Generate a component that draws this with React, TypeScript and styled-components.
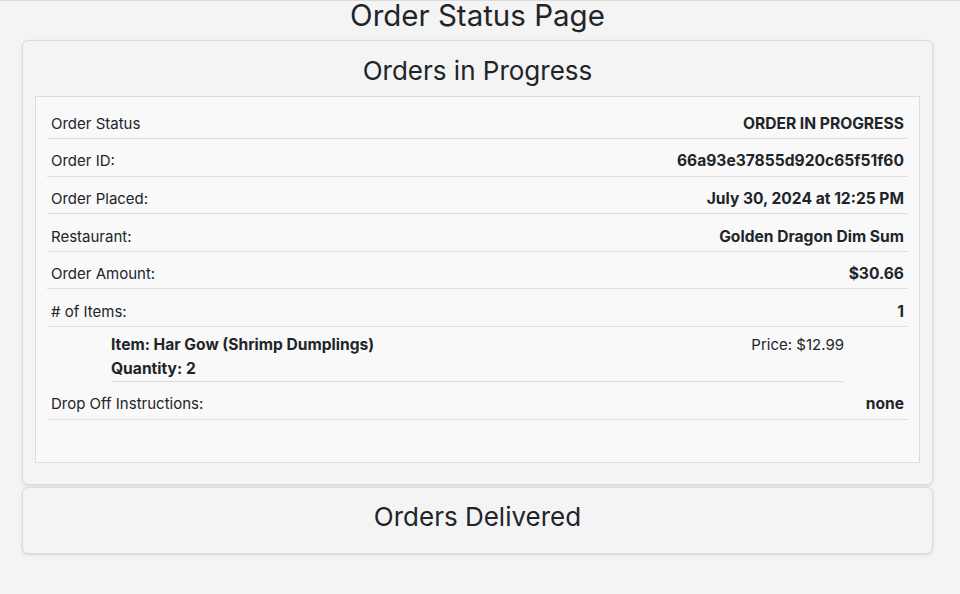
import React from "react";
import styled, { createGlobalStyle } from "styled-components";

const GlobalStyle = createGlobalStyle`
  html, body {
    margin: 0;
    padding: 0;
    background: #f4f4f4;
    font-family: Inter, "Noto Sans", sans-serif;
    color: #212529;
  }
`;

type Detail = { label: string; value: string };

const details: Detail[] = [
  { label: "Order Status", value: "ORDER IN PROGRESS" },
  { label: "Order ID:", value: "66a93e37855d920c65f51f60" },
  { label: "Order Placed:", value: "July 30, 2024 at 12:25 PM" },
  { label: "Restaurant:", value: "Golden Dragon Dim Sum" },
  { label: "Order Amount:", value: "$30.66" },
  { label: "# of Items:", value: "1" },
];

const items = [{ name: "Har Gow (Shrimp Dumplings)", quantity: 2, price: 12.99 }];

const App: React.FC = () => {
  return (
    <Page>
      <GlobalStyle />
      <Title>Order Status Page</Title>
      <Section>
        <SectionTitle>Orders in Progress</SectionTitle>
        <OrderBox>
          {details.map((d) => (
            <Row key={d.label}>
              <Label>{d.label}</Label>
              <Value>{d.value}</Value>
            </Row>
          ))}
          <ItemList>
            {items.map((item) => (
              <Item key={item.name}>
                <ItemInfo>
                  <div>Item: {item.name}</div>
                  <div>Quantity: {item.quantity}</div>
                </ItemInfo>
                <Price>Price: ${item.price.toFixed(2)}</Price>
              </Item>
            ))}
          </ItemList>
          <Row>
            <Label>Drop Off Instructions:</Label>
            <Value>none</Value>
          </Row>
        </OrderBox>
      </Section>
      <Section>
        <SectionTitle>Orders Delivered</SectionTitle>
      </Section>
    </Page>
  );
};

export default App;

const Page = styled.div`
  border-top: 1px solid #dcdcdc;
  padding: 0 27px 0 22px;
  min-height: 593px;
`;

const Title = styled.h1`
  margin: 0 0 10px;
  font-size: 29.5px;
  line-height: 29px;
  font-weight: 400;
  text-align: center;
`;

const Section = styled.section`
  background: #f4f4f4;
  border: 1px solid #dcdcdc;
  border-radius: 6px;
  box-shadow: 0 1px 3px rgba(0, 0, 0, 0.12);
  padding: 13.5px 12px 21px;
  margin-bottom: 2px;
`;

const SectionTitle = styled.h2`
  margin: 0;
  font-size: 26px;
  line-height: 31px;
  font-weight: 400;
  text-align: center;
`;

const OrderBox = styled.div`
  margin-top: 10px;
  background: #f9f9f9;
  border: 1px solid #dcdcdc;
  padding: 5px 11px 42px;
`;

const Row = styled.div`
  display: flex;
  justify-content: space-between;
  align-items: center;
  padding: 12.3px 4px 4.3px;
  line-height: 20px;
  font-size: 15px;
  border-bottom: 1px solid #dedede;
`;

const Label = styled.span`
  font-weight: 400;
`;

const Value = styled.span`
  font-weight: 700;
  font-size: 15.6px;
`;

const ItemList = styled.ul`
  list-style: none;
  margin: 0 64px;
  padding: 0;
`;

const Item = styled.li`
  display: flex;
  justify-content: space-between;
  align-items: flex-start;
  padding-top: 6px;
  font-size: 15px;
  line-height: 24px;
  border-bottom: 1px solid #dedede;
`;

const ItemInfo = styled.div`
  font-weight: 700;
  font-size: 15.6px;
`;

const Price = styled.span`
  font-weight: 400;
`;
